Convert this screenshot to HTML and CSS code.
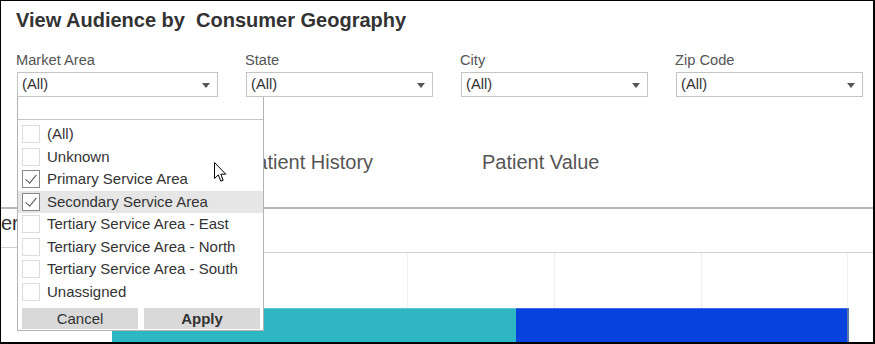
FILE: index.html
```html
<!DOCTYPE html>
<html lang="en">
<head>
    <meta charset="UTF-8">
    <title>View Audience by Consumer Geography</title>
    <link rel="stylesheet" href="styles.css">
</head>
<body>
    <div class="frame">
        <h1 class="title">View Audience by&nbsp; Consumer Geography</h1>

        <div class="filters">
            <div class="filter filter-market">
                <label>Market Area</label>
                <div class="select select-wide"><span>(All)</span><i class="arrow"></i></div>
            </div>
            <div class="filter">
                <label>State</label>
                <div class="select"><span>(All)</span><i class="arrow"></i></div>
            </div>
            <div class="filter">
                <label>City</label>
                <div class="select"><span>(All)</span><i class="arrow"></i></div>
            </div>
            <div class="filter filter-last">
                <label>Zip Code</label>
                <div class="select"><span>(All)</span><i class="arrow"></i></div>
            </div>
        </div>

        <div class="tabs">
            <span class="tab">Patient History</span>
            <span class="tab">Patient Value</span>
        </div>

        <div class="header-row">
            <div class="row-head">er</div>
            <div class="row-rest"></div>
        </div>

        <div class="grid">
            <div class="cell"></div>
            <div class="cell"></div>
            <div class="cell"></div>
            <div class="cell"></div>
            <div class="cell"></div>
        </div>

        <div class="bars">
            <div class="bar bar-teal" style="width: 404px"></div>
            <div class="bar bar-blue" style="width: 331px"></div>
            <div class="bar-edge"></div>
        </div>

        <!-- open Market Area dropdown -->
        <div class="dropdown">
            <div class="search"></div>
            <ul class="options">
                <li><span class="check"></span>(All)</li>
                <li><span class="check"></span>Unknown</li>
                <li><span class="check checked"></span>Primary Service Area</li>
                <li class="hover"><span class="check checked"></span>Secondary Service Area</li>
                <li><span class="check"></span>Tertiary Service Area - East</li>
                <li><span class="check"></span>Tertiary Service Area - North</li>
                <li><span class="check"></span>Tertiary Service Area - South</li>
                <li><span class="check"></span>Unassigned</li>
            </ul>
            <div class="actions">
                <button class="btn">Cancel</button>
                <button class="btn btn-apply">Apply</button>
            </div>
        </div>

        <svg class="cursor" width="13" height="21" viewBox="0 0 13 21">
            <path d="M0.5 0.5 L0.5 16.5 L4.3 12.9 L6.8 19.2 L9.2 18.2 L6.8 12.2 L11.8 12.2 Z" fill="#fff" stroke="#000" stroke-width="1" stroke-linejoin="miter"/>
        </svg>
    </div>
</body>
</html>
```

FILE: styles.css
```css
* {
    margin: 0;
    padding: 0;
    box-sizing: border-box;
}

body {
    font-family: Arial, 'Liberation Sans', Helvetica, sans-serif;
    background: #fff;
    color: #333;
}

.frame {
    position: relative;
    width: 875px;
    height: 344px;
    border-top: 1px solid #000;
    border-left: 1px solid #000;
    border-right: 2px solid #000;
    border-bottom: 2px solid #000;
    overflow: hidden;
    background: #fff;
}

.title {
    margin-top: 7px;
    padding-left: 15px;
    font-size: 20px;
    line-height: 24px;
    font-weight: bold;
    color: #333;
    white-space: nowrap;
}

/* filter row */
.filters {
    display: flex;
    margin-top: 20px;
    padding-left: 15px;
    font-size: 11pt;
}

.filter {
    flex-shrink: 0;
    width: 215px;
}

.filter-market {
    width: 229px;
}

.filter-last {
    width: auto;
    flex: 1;
}

.filter label {
    display: block;
    height: 16px;
    line-height: 16px;
    margin-bottom: 4px;
    color: #555;
}

.select {
    display: flex;
    align-items: center;
    justify-content: space-between;
    width: 187px;
    height: 25px;
    margin-left: 1px;
    padding: 0 7px 0 4px;
    border: 1px solid #c4c4c4;
    line-height: 23px;
    color: #333;
}

.select-wide {
    width: 201px;
}

.arrow {
    width: 0;
    height: 0;
    border-left: 4px solid transparent;
    border-right: 4px solid transparent;
    border-top: 5px solid #555;
    margin-top: 1px;
}

/* tabs */
.tabs {
    display: flex;
    height: 112px;
    padding: 53px 0 0 242px;
    border-bottom: 2px solid #b8b8b8;
    font-size: 20px;
    line-height: 24px;
    color: #555;
}

.tab {
    width: 239px;
    white-space: nowrap;
}

.header-row {
    display: flex;
    align-items: flex-start;
}

.row-head {
    width: 16px;
    height: 39px;
    padding-top: 2px;
    border-bottom: 1px solid #d0d0d0;
    font-size: 20px;
    line-height: 24px;
    color: #333;
    white-space: nowrap;
}

.row-rest {
    flex: 1;
    height: 44px;
    border-bottom: 1px solid #d0d0d0;
}

/* chart grid and bars */
.grid {
    display: flex;
    height: 55px;
    margin-left: 111px;
}

.cell {
    width: 147.3px;
    border-left: 1px solid #efefef;
}

.cell:last-child {
    border-right: 1px solid #efefef;
}

.bars {
    display: flex;
    height: 34px;
    margin-left: 111px;
}

.bar {
    height: 100%;
}

.bar-teal {
    background: #2eb7c2;
    border-top: 1px solid #5ec9d1;
}

.bar-blue {
    background: #0742de;
    border-top: 1px solid #3d6ae6;
}

.bar-edge {
    width: 2px;
    background: #5a78ad;
}

/* dropdown panel */
.dropdown {
    position: absolute;
    left: 16px;
    top: 96px;
    width: 247px;
    padding-bottom: 1px;
    background: #fff;
    border: 1px solid #b3b3b3;
    border-top: none;
    font-size: 15px;
}

.search {
    height: 23px;
    border-bottom: 1px solid #c4c4c4;
}

.options {
    list-style: none;
    padding-top: 3px;
}

.options li {
    display: flex;
    align-items: center;
    height: 22.5px;
    padding-left: 4px;
    line-height: 22.5px;
    color: #333;
    white-space: nowrap;
}

.options li.hover {
    background: #e6e6e6;
}

.check {
    position: relative;
    width: 18px;
    height: 18px;
    margin-right: 7px;
    border: 1px solid #dcdcdc;
    background: #fff;
}

.check.checked {
    border-color: #8a8a8a;
}

.check.checked::after {
    content: "";
    position: absolute;
    left: 5px;
    top: 1px;
    width: 5px;
    height: 10px;
    border-right: 1.5px solid #555;
    border-bottom: 1.5px solid #555;
    transform: rotate(40deg);
}

.actions {
    display: flex;
    gap: 6px;
    margin-top: 5px;
    padding-left: 4px;
}

.btn {
    width: 116px;
    height: 21px;
    border: none;
    background: #d9d9d9;
    font-family: inherit;
    font-size: 15px;
    line-height: 21px;
    color: #333;
}

.btn-apply {
    font-weight: bold;
}

.cursor {
    position: absolute;
    left: 213px;
    top: 161px;
}
```
